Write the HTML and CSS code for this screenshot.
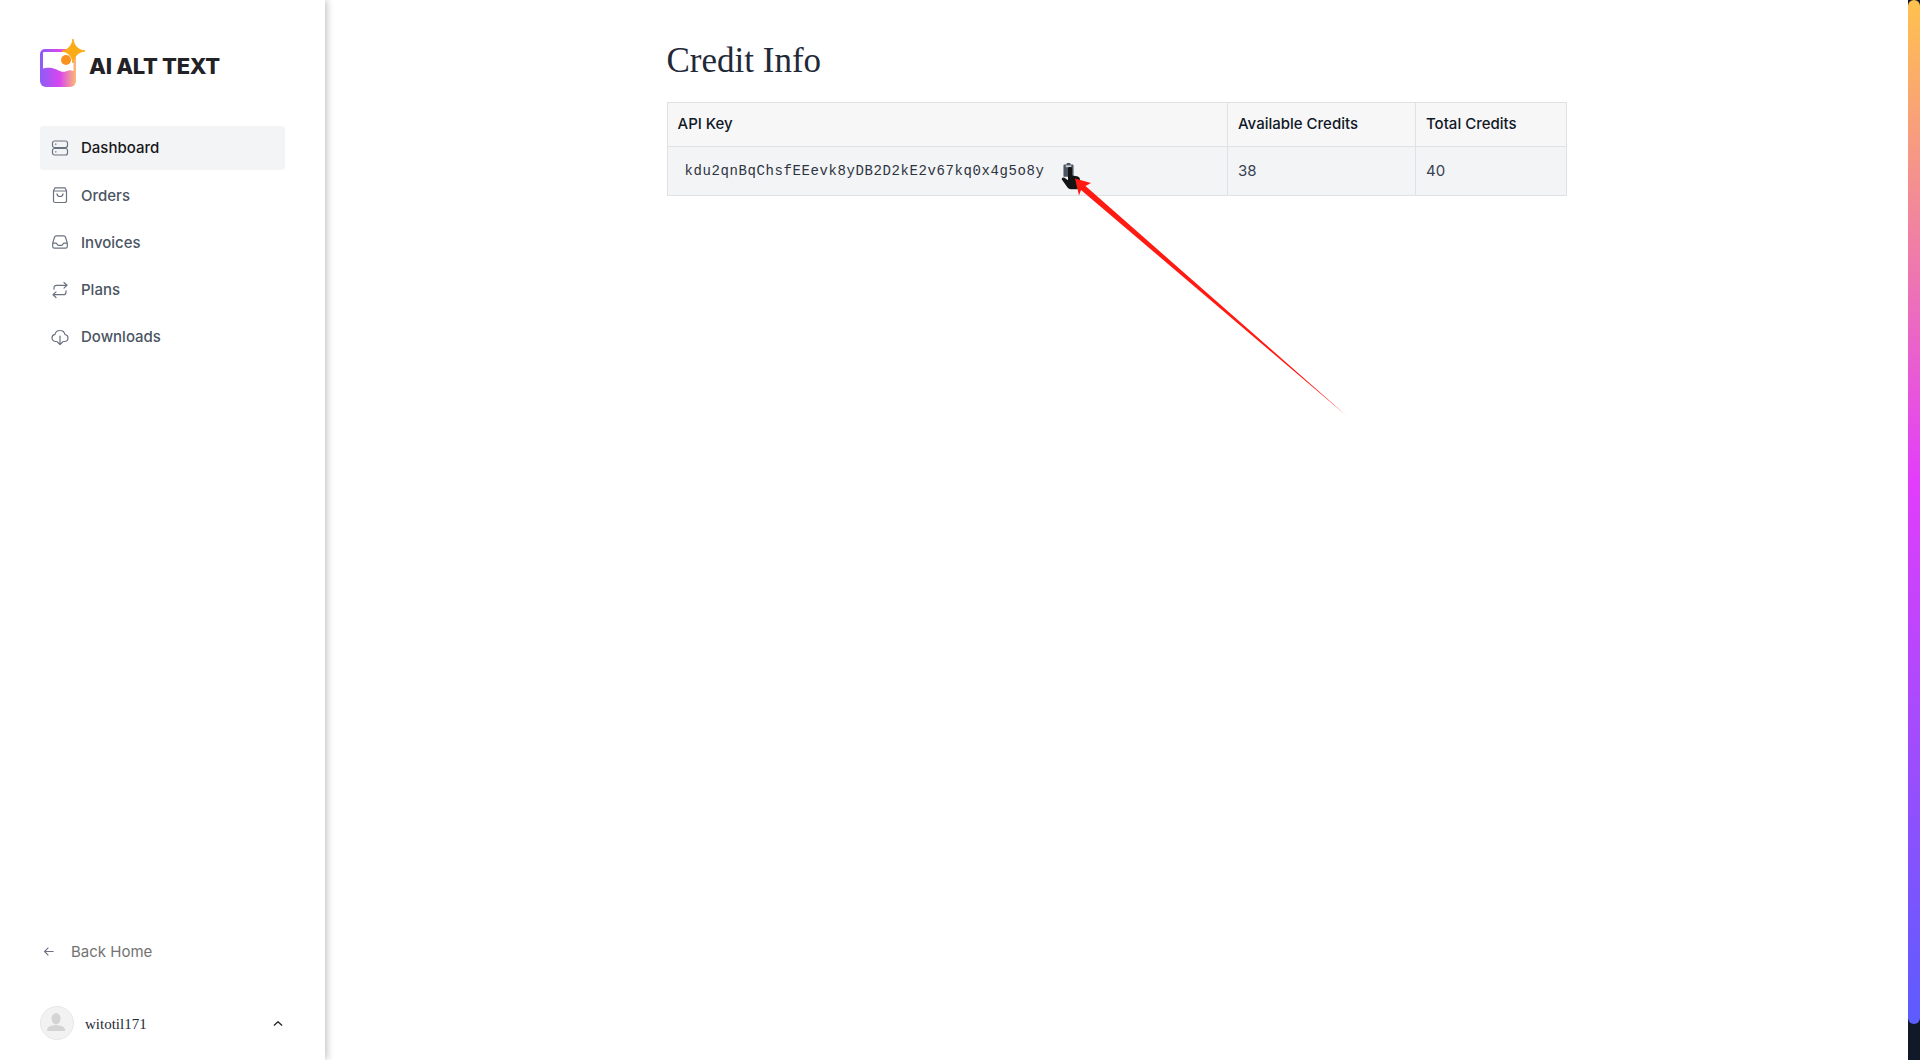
FILE: index.html
```html
<!DOCTYPE html>
<html lang="en">
<head>
<meta charset="utf-8">
<title>Credit Info</title>
<link rel="stylesheet" href="styles.css">
</head>
<body>
<div class="app">
  <aside class="sidebar">
    <div class="brand">
      <svg class="brand-mark" viewBox="0 0 46 48" width="46" height="48">
        <defs>
          <linearGradient id="lg1" x1="0" y1="0" x2="1" y2="0"><stop offset="0" stop-color="#8b5cf6"/><stop offset=".55" stop-color="#d946ef"/><stop offset="1" stop-color="#fdba74"/></linearGradient>
        </defs>
        <path d="M5 10h26a5 5 0 0 1 5 5v27a6 6 0 0 1-6 6H6a6 6 0 0 1-6-6V15a5 5 0 0 1 5-5z" fill="url(#lg1)"/>
        <path d="M3 14a1 1 0 0 1 1-1h28a1.500 1.500 0 0 1 1.500 1.500V32c-3-1.500-5-.5-8 .5-5 1.500-8-2.500-13.500-3.500-4-.7-7 0-9 .6z" fill="#fff"/>
        <circle cx="26" cy="21" r="5" fill="#f7931e"/>
        <path d="M33 0c1 7 5 11 12 12-7 1-11 5-12 12-1-7-5-11-11-12 6-1 10-5 11-12z" fill="#fbab15" stroke="#fbab15" stroke-linejoin="round"/>
      </svg>
      <span class="brand-name">AI ALT TEXT</span>
    </div>
    <nav class="nav">
      <a class="nav-item active">
        <svg class="nav-icon" viewBox="0 0 18 18"><rect x="1.500" y="2" width="15" height="6.500" rx="2"/><rect x="1.500" y="9.500" width="15" height="6.500" rx="2"/><path d="M4.500 5.200h.5M4.500 12.800h.5"/></svg>
        <span>Dashboard</span>
      </a>
      <a class="nav-item">
        <svg class="nav-icon" viewBox="0 0 18 18"><path d="M4 1.800h10l1.500 3.200v9.700a1.800 1.800 0 0 1-1.800 1.800H4.300a1.800 1.800 0 0 1-1.800-1.800V5z"/><path d="M2.500 5h13M6 7.800c.6 3.600 5.400 3.600 6 0"/></svg>
        <span>Orders</span>
      </a>
      <a class="nav-item">
        <svg class="nav-icon icon-24" viewBox="0 0 24 24"><path d="M2.250 13.500h3.860a2.250 2.250 0 012.012 1.244l.256.512a2.250 2.250 0 002.013 1.244h3.218a2.250 2.250 0 002.013-1.244l.256-.512a2.250 2.250 0 012.013-1.244h3.859m-19.500.338V18a2.250 2.250 0 002.250 2.250h15A2.250 2.250 0 0021.750 18v-4.162c0-.224-.034-.447-.1-.661L19.240 5.338a2.250 2.250 0 00-2.150-1.588H6.911a2.250 2.250 0 00-2.150 1.588L2.350 13.177a2.250 2.250 0 00-.1.661z"/></svg>
        <span>Invoices</span>
      </a>
      <a class="nav-item">
        <svg class="nav-icon" viewBox="0 0 18 18"><path d="M13 1.500l3 2.800-3 2.800M16 4.300H5.500A2.500 2.500 0 0 0 3 6.800v1.400M5 16.500l-3-2.800 3-2.800M2 13.700h10.500a2.500 2.500 0 0 0 2.500-2.500V9.800"/></svg>
        <span>Plans</span>
      </a>
      <a class="nav-item">
        <svg class="nav-icon" viewBox="0 0 18 18"><path d="M5.500 13.500H4.600A3.600 3.600 0 0 1 1 9.900a3.600 3.600 0 0 1 3-3.500A5 5 0 0 1 9 2.500a5 5 0 0 1 4.900 4A3.600 3.600 0 0 1 17 10a3.600 3.600 0 0 1-3.600 3.500h-.9"/><path d="M9 8v8.500M6.400 14L9 16.600l2.600-2.600"/></svg>
        <span>Downloads</span>
      </a>
    </nav>
    <a class="back-home">
      <svg class="back-icon" viewBox="0 0 14 14"><path d="M13 7H2M6.500 2.500L2 7l4.500 4.500"/></svg>
      <span>Back Home</span>
    </a>
    <div class="user-row">
      <div class="avatar">
        <svg viewBox="0 0 34 34" width="32" height="32"><ellipse cx="16" cy="12.500" rx="4.800" ry="6" fill="#d4d4d4"/><path d="M6.500 24.500c0-3.500 4.500-5 9.500-5s9.500 1.500 9.500 5v1H6.500z" fill="#d4d4d4"/></svg>
      </div>
      <span class="user-name">witotil171</span>
      <svg class="chevron" viewBox="0 0 12 8"><path d="M1.500 6L6 1.800 10.500 6"/></svg>
    </div>
  </aside>
  <main class="main">
    <div class="content">
      <h1 class="title">Credit Info</h1>
      <table class="credits">
        <colgroup><col class="col-key"><col class="col-avail"><col class="col-total"></colgroup>
        <thead>
          <tr><th>API Key</th><th class="num">Available Credits</th><th class="num">Total Credits</th></tr>
        </thead>
        <tbody>
          <tr>
            <td><div class="key-cell"><code class="key">kdu2qnBqChsfEEevk8yDB2D2kE2v67kq0x4g5o8y</code>
              <svg class="copy" viewBox="0 0 12 16"><path d="M1.500 2.500h2.500V1h4v1.500h2.500a1 1 0 0 1 1 1V15a1 1 0 0 1-1 1h-9a1 1 0 0 1-1-1V3.500a1 1 0 0 1 1-1z" fill="#4b5563"/><rect x="3" y="3.500" width="6" height="2" fill="#d1d5db"/></svg>
            </div></td>
            <td class="num">38</td>
            <td class="num">40</td>
          </tr>
        </tbody>
      </table>
    </div>
  </main>
  <div class="edge"><div class="edge-fill"></div></div>
</div>
<svg class="annotation" viewBox="0 0 1920 1060" width="1920" height="1060">
  <defs>
    <linearGradient id="tail" gradientUnits="userSpaceOnUse" x1="1338" y1="408" x2="1348" y2="417"><stop offset="0" stop-color="#ff1a12"/><stop offset="1" stop-color="#ff1a12" stop-opacity=".2"/></linearGradient>
  </defs>
  <path d="M1068 168c0-1.500 4-1.500 4 0v7.500l5 .8c2 .4 3 1.500 3 3.500v5c0 2-1 4-3 4.500h-6c-2 0-3-1-4-2.500l-5-7c-1-1.500 1-3 2.500-2l3.500 2.500z" fill="#141414"/>
  <path d="M1075 178.500L1091 183 1085.500 186 1348 417 1081 190 1079 195.500z" fill="url(#tail)"/>
</svg>
</body>
</html>
```
FILE: styles.css
```css
* { box-sizing: border-box; }
html, body { margin: 0; height: 100%; }
body { background: #fff; font-family: Inter, "Liberation Sans", sans-serif; overflow: hidden; position: relative; }
a { text-decoration: none; color: inherit; }

.app { display: flex; height: 1060px; }

.sidebar {
  width: 325px; flex: none; display: flex; flex-direction: column;
  padding: 39px 40px 20px; background: #fff;
  box-shadow: 2px 0 7px rgba(0, 0, 0, .24);
  position: relative; z-index: 1;
}
.brand { display: flex; align-items: flex-end; height: 48px; }
.brand-mark { flex: none; }
.brand-name { font-size: 22px; font-weight: 800; color: #222226; letter-spacing: -.3px; margin-left: 3px; line-height: 27px; margin-bottom: 7px; }

.nav { display: flex; flex-direction: column; gap: 3.200px; margin-top: 39px; }
.nav-item { display: flex; align-items: center; gap: 12px; height: 44px; padding-left: 11px; border-radius: 3px; font-size: 15px; font-weight: 450; color: #4b5563; }
.nav-item.active { background: #f3f4f6; color: #18181b; padding-bottom: 1px; }
.nav-icon { width: 18px; height: 18px; flex: none; fill: none; stroke: #6b7280; stroke-width: 1.200; stroke-linecap: round; stroke-linejoin: round; }
.icon-24 { stroke-width: 1.600; }

.back-home { margin-top: auto; display: flex; align-items: center; gap: 17px; height: 44px; padding-left: 3px; font-size: 15px; color: #737373; }
.back-icon { width: 11px; height: 11px; fill: none; stroke: #6b7280; stroke-width: 1.400; stroke-linecap: round; stroke-linejoin: round; }

.user-row { display: flex; align-items: center; margin-top: 33px; height: 34px; }
.avatar { width: 34px; height: 34px; border-radius: 50%; background: #f2f2f2; border: 1px solid #e8e8e8; flex: none; }
.user-name { margin: 2px 0 0 11px; font-family: "Liberation Serif", serif; font-size: 15px; color: #1f2937; }
.chevron { margin-left: auto; margin-right: 2px; width: 10px; height: 7px; fill: none; stroke: #27272a; stroke-width: 1.600; stroke-linecap: round; stroke-linejoin: round; }

.main { flex: 1; min-width: 0; padding-top: 41px; }
.content { width: 900px; margin: 0 auto; }
.title { margin: 0 0 21px; font-family: "Liberation Serif", serif; font-size: 35px; font-weight: 400; line-height: 40px; color: #1f2937; }

.credits { width: 899px; table-layout: fixed; border-collapse: collapse; font-size: 15px; }
.col-key { width: 560px; }
.col-avail { width: 188px; }
.col-total { width: 151px; }
.credits th, .credits td { border: 1px solid #dfe1e5; padding: 0 10px; text-align: left; }
.credits .num { padding-left: 10.500px; }
.credits th { height: 44px; padding-bottom: 2px; background: #f7f7f8; font-weight: 450; color: #111827; }
.credits td { height: 49px; background: #f3f4f6; color: #374151; }
.credits td.num { padding-bottom: 1px; }
.key-cell { display: flex; align-items: center; padding-left: 7px; }
.key { font-family: "Liberation Mono", monospace; font-size: 14px; letter-spacing: .6px; color: #2d3340; }
.copy { width: 11px; height: 15px; margin-left: 18px; position: relative; top: -2px; }

.edge { width: 12px; flex: none; background: #111827; }
.edge-fill { height: 1024px; border-radius: 6px; background: linear-gradient(#ffc24d 0%, #e23dfb 47%, #5b5cff 100%); }

.annotation { position: absolute; left: 0; top: 0; z-index: 2; pointer-events: none; }
```
